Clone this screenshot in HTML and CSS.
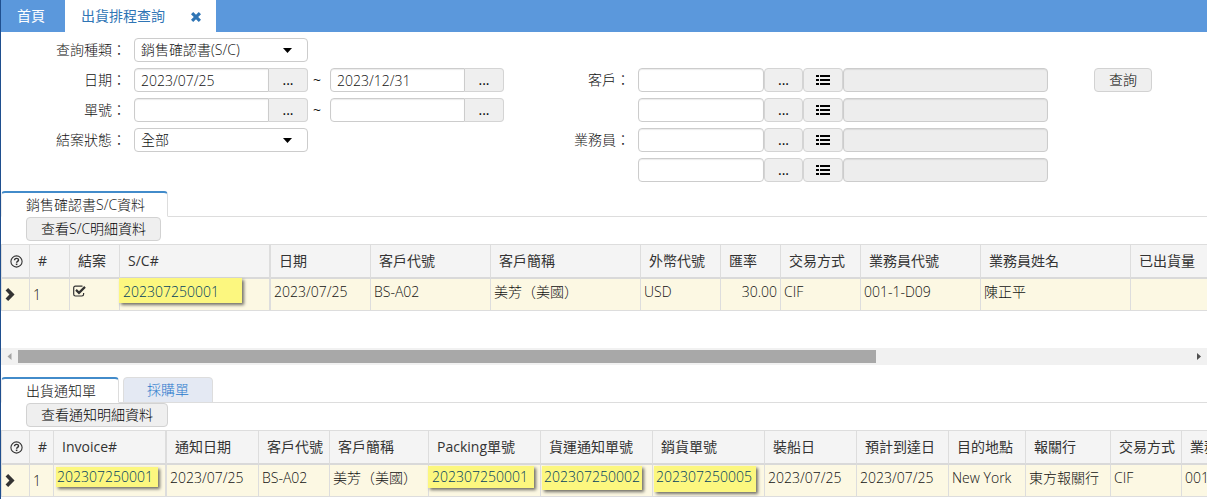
FILE: index.html
```html
<!DOCTYPE html>
<html lang="zh-Hant">
<head>
<meta charset="utf-8">
<meta name="viewport" content="width=device-width, initial-scale=1">
<title>出貨排程查詢</title>
<link rel="stylesheet" href="styles.css">
</head>
<body>
<svg class="sprite" aria-hidden="true">
  <symbol id="i-list" viewBox="0 0 14 12"><path d="M0 1h3v2H0zM4 1h10v2H4zM0 5h3v2H0zM4 5h10v2H4zM0 9h3v2H0zM4 9h10v2H4z"/></symbol>
  <symbol id="i-caret" viewBox="0 0 9 5"><path d="M0 0h9L4.5 5z"/></symbol>
  <symbol id="i-help" viewBox="0 0 13 13"><circle cx="6.5" cy="6.5" r="5.6" fill="none" stroke="currentColor" stroke-width="1.1"/><path d="M4.5 5.2C4.6 2.7 8.6 2.8 8.5 5.1 8.4 6.4 6.6 6.4 6.6 7.8" fill="none" stroke="currentColor" stroke-width="1.4"/><path d="M5.8 8.6h1.6v1.5H5.8z"/></symbol>
  <symbol id="i-chevron" viewBox="0 0 9 12"><path d="M.4 2.4 2.8.1 8.7 6l-5.900 5.900L.4 9.600 4 6z"/></symbol>
</svg>

<nav class="topbar">
  <a class="topbar-tab" href="#">首頁</a>
  <div class="topbar-tab topbar-active">
    <a href="#">出貨排程查詢</a>
    <button class="tab-close" type="button" aria-label="關閉"><svg viewBox="0 0 10 10"><path d="M2.2 0 5 2.8 7.8 0 10 2.2 7.2 5 10 7.8 7.8 10 5 7.2 2.2 10 0 7.8 2.8 5 0 2.2z"/></svg></button>
  </div>
</nav>

<main>
<form class="query">
  <div class="fields fields-left">
    <label for="kind">查詢種類：</label>
    <div class="select"><select id="kind"><option>銷售確認書(S/C)</option></select><svg><use href="#i-caret"/></svg></div>
    <label for="date1">日期：</label>
    <div class="range">
      <div class="picker"><input id="date1" value="2023/07/25"><button type="button">...</button></div>
      <span>~</span>
      <div class="picker"><input aria-label="結束日期" value="2023/12/31"><button type="button">...</button></div>
    </div>
    <label for="no1">單號：</label>
    <div class="range">
      <div class="picker"><input id="no1"><button type="button">...</button></div>
      <span>~</span>
      <div class="picker"><input aria-label="結束單號"><button type="button">...</button></div>
    </div>
    <label for="state">結案狀態：</label>
    <div class="select"><select id="state"><option>全部</option></select><svg><use href="#i-caret"/></svg></div>
  </div>
  <div class="fields fields-right">
    <label for="cust1">客戶：</label>
    <div class="lookup"><input id="cust1"><button type="button">...</button><button type="button" aria-label="清單"><svg><use href="#i-list"/></svg></button><input aria-label="客戶名稱" readonly></div>
    <span></span>
    <div class="lookup"><input aria-label="客戶迄"><button type="button">...</button><button type="button" aria-label="清單"><svg><use href="#i-list"/></svg></button><input aria-label="客戶迄名稱" readonly></div>
    <label for="sales1">業務員：</label>
    <div class="lookup"><input id="sales1"><button type="button">...</button><button type="button" aria-label="清單"><svg><use href="#i-list"/></svg></button><input aria-label="業務員姓名" readonly></div>
    <span></span>
    <div class="lookup"><input aria-label="業務員迄"><button type="button">...</button><button type="button" aria-label="清單"><svg><use href="#i-list"/></svg></button><input aria-label="業務員迄姓名" readonly></div>
  </div>
  <button class="button submit" type="button">查詢</button>
</form>

<section class="panel">
  <div class="tabs"><button class="tab tab-on" type="button">銷售確認書S/C資料</button></div>
  <div class="tools"><button class="button" type="button">查看S/C明細資料</button></div>
  <div class="grid">
    <table class="t-orders">
      <colgroup><col class="w28"><col class="w40"><col class="w50"><col class="w151"><col class="w100"><col class="w120"><col class="w150"><col class="w80"><col class="w60"><col class="w80"><col class="w120"><col class="w150"><col class="w150"></colgroup>
      <thead><tr><th class="mark"><svg class="help"><use href="#i-help"/></svg></th><th>#</th><th>結案</th><th class="frozen">S/C#</th><th>日期</th><th>客戶代號</th><th>客戶簡稱</th><th>外幣代號</th><th>匯率</th><th>交易方式</th><th>業務員代號</th><th>業務員姓名</th><th>已出貨量</th></tr></thead>
      <tbody><tr><td class="mark"><svg class="chevron"><use href="#i-chevron"/></svg></td><td class="seq">1</td><td><input class="check" type="checkbox" checked aria-label="結案"></td><td class="frozen"><a class="hit hit-wide" href="#">202307250001</a></td><td>2023/07/25</td><td>BS-A02</td><td>美芳（美國）</td><td>USD</td><td class="num">30.00</td><td>CIF</td><td>001-1-D09</td><td>陳正平</td><td></td></tr></tbody>
    </table>
  </div>
  <div class="scroll">
    <svg class="dim" viewBox="0 0 17 17"><path d="M10.5 5v7L6.500 8.500z"/></svg>
    <div class="track"><div class="thumb"></div></div>
    <svg viewBox="0 0 17 17"><path d="M7 5v7l4-3.500z"/></svg>
  </div>
</section>

<section class="panel">
  <div class="tabs"><button class="tab tab-on" type="button">出貨通知單</button><button class="tab" type="button">採購單</button></div>
  <div class="tools"><button class="button" type="button">查看通知明細資料</button></div>
  <div class="grid">
    <table class="t-notices">
      <colgroup><col class="w28"><col class="w24"><col class="w113"><col class="w92"><col class="w71"><col class="w99"><col class="w112"><col class="w112"><col class="w112"><col class="w92"><col class="w92"><col class="w77"><col class="w85"><col class="w71"><col class="w120"></colgroup>
      <thead><tr><th class="mark"><svg class="help"><use href="#i-help"/></svg></th><th>#</th><th class="frozen">Invoice#</th><th>通知日期</th><th>客戶代號</th><th>客戶簡稱</th><th>Packing單號</th><th>貨運通知單號</th><th>銷貨單號</th><th>裝船日</th><th>預計到達日</th><th>目的地點</th><th>報關行</th><th>交易方式</th><th>業務員代號</th></tr></thead>
      <tbody><tr><td class="mark"><svg class="chevron"><use href="#i-chevron"/></svg></td><td class="seq">1</td><td class="frozen"><a class="hit hit-slim" href="#">202307250001</a></td><td>2023/07/25</td><td>BS-A02</td><td>美芳（美國）</td><td><a class="hit" href="#">202307250001</a></td><td><a class="hit hit-mid" href="#">202307250002</a></td><td><a class="hit hit-tall" href="#">202307250005</a></td><td>2023/07/25</td><td>2023/07/25</td><td>New York</td><td>東方報關行</td><td>CIF</td><td>001-1-D09</td></tr></tbody>
    </table>
  </div>
</section>
</main>
</body>
</html>
```
FILE: styles.css
```css
* { box-sizing: border-box; }

body {
  margin: 0;
  min-height: 100vh;
  border-left: 1px solid #1f4f8f;
  background: #fff;
  color: #111;
  font: 14px/20px "Open Sans", "Noto Sans CJK TC", sans-serif;
  font-weight: 300;
  overflow: hidden;
}

button, input, select {
  margin: 0;
  font: inherit;
  color: inherit;
}

a { color: inherit; text-decoration: none; }
svg { display: block; fill: currentColor; }
.sprite { display: none; }

/* Top bar */
.topbar { display: flex; height: 32px; background: #5b98dc; }
.topbar-tab { display: flex; align-items: center; padding: 0 20px 0 16px; color: #fff; font-weight: 400; }
.topbar-active { gap: 26px; padding: 0 15px 0 16px; background: #fff; color: #2f75b5; }
.tab-close { padding: 2px 0 0; border: 0; background: none; }
.tab-close svg { width: 10px; height: 10px; }

/* Query form */
.query {
  display: grid;
  grid-template-columns: 503px 544px auto;
  padding-top: 6px;
}
.fields { display: grid; grid-auto-rows: 24px; gap: 6px 8px; align-content: start; }
.fields-left { grid-template-columns: 125px 1fr; }
.fields-right { grid-template-columns: 126px 1fr; padding-top: 30px; }
.fields label { align-self: center; text-align: right; }
.submit { align-self: start; justify-self: start; margin: 30px 0 0 46px; }

.picker, .lookup, .range { display: flex; }
.range { align-items: center; }
.range span { width: 22px; padding-right: 4px; text-align: center; font-weight: 400; }

.query input {
  height: 24px;
  padding: 1px 6px;
  border: 1px solid #ccc;
  border-radius: 4px;
  background: #fff;
  box-shadow: inset 0 1px 1px rgba(0, 0, 0, .08);
}
.picker input { width: 135px; border-radius: 4px 0 0 4px; }
.picker button, .lookup button {
  width: 39px;
  height: 24px;
  padding: 0;
  border: 1px solid #d4d4d4;
  background: #efefef;
  color: #000;
  font-weight: 400;
}
.picker button { border-left: 0; border-radius: 0 4px 4px 0; }
.lookup input { width: 126px; }
.lookup input[readonly] { flex: 1; min-width: 0; background: #ededed; }
.lookup button { border-radius: 4px; }
.lookup button + button { width: 40px; }
.lookup svg { width: 14px; height: 12px; margin: 0 auto; }

.select { display: grid; width: 174px; align-items: center; }
.select select, .select svg { grid-area: 1 / 1; }
.select select {
  width: 100%;
  height: 24px;
  padding: 0 6px;
  border: 1px solid #ccc;
  border-radius: 4px;
  background: #fff;
  appearance: none;
}
.select svg { z-index: 1; justify-self: end; width: 9px; height: 5px; margin-right: 16px; color: #000; pointer-events: none; }

.button {
  height: 24px;
  padding: 0 14px;
  border: 1px solid #d2d2d2;
  border-radius: 4px;
  background: #efefef;
  color: #000;
}

/* Tabs */
.panel + .panel { padding-top: 12px; }
.query + .panel { padding-top: 9px; }
.tabs { display: flex; gap: 4px; height: 26px; border-bottom: 1px solid #ddd; }
.tab {
  height: 26px;
  padding: 0 23px;
  border: 1px solid #ddd;
  border-radius: 4px 4px 0 0;
  background: #e4e9f3;
  color: #2878cc;
}
.tab-on { padding: 1px 22px 0 24px; border-top: 2px solid #428bca; border-left-color: #eee; border-bottom-color: #fff; background: #fff; color: #111; }
.tools { padding: 0 25px 3px; }
.tools .button { display: block; }

/* Data tables */
.grid { overflow: hidden; }
table { table-layout: fixed; border-spacing: 0; border-left: 1px solid #ddd; }
.t-orders { width: 1280px; }
.t-notices { width: 1301px; }
th, td { border-right: 1px solid #ddd; white-space: nowrap; text-align: left; }
th {
  height: 35px;
  padding: 0 0 0 8px;
  border-top: 1px solid #ddd;
  border-bottom: 2px solid #d9d9d9;
  background: #f4f4f4;
  color: #333;
  font-weight: 400;
}
td {
  height: 32px;
  padding: 3px 3px 0;
  border-bottom: 1px solid #ddd;
  background: #fcf8e3;
  vertical-align: top;
}
.frozen { border-right-width: 2px; }
td.num { text-align: right; }
td.seq { padding-top: 6px; }
td.mark { padding: 9px 0 0 3px; color: #333; }
.help { width: 13px; height: 13px; }
.chevron { width: 10px; height: 13px; }

.w24 { width: 24px; }
.w28 { width: 28px; }
.w40 { width: 40px; }
.w50 { width: 50px; }
.w60 { width: 60px; }
.w71 { width: 71px; }
.w77 { width: 77px; }
.w80 { width: 80px; }
.w85 { width: 85px; }
.w92 { width: 92px; }
.w99 { width: 99px; }
.w100 { width: 100px; }
.w112 { width: 112px; }
.w113 { width: 113px; }
.w120 { width: 120px; }
.w150 { width: 150px; }
.w151 { width: 151px; }

.check {
  display: block;
  width: 13px;
  height: 12px;
  margin-top: 3px;
  appearance: none;
  background: url("data:image/svg+xml,%3Csvg xmlns='http://www.w3.org/2000/svg' viewBox='0 0 13 12' fill='none' stroke='%23333'%3E%3Cpath d='M9.500 1.200H2.400Q.7 1.200.7 2.800v6.500q0 1.700 1.700 1.700h6.500q1.700 0 1.700-1.700V8' stroke-width='1.200'/%3E%3Cpath d='M3 4.900l3 3 6-6' stroke-width='2.200'/%3E%3C/svg%3E") no-repeat;
}

.hit {
  display: block;
  width: fit-content;
  margin: -2px 0 0 -4px;
  padding: 1px 6px 1px 4px;
  background: #fcf77f;
  color: #00405f;
  box-shadow: 2px 2px 3px rgba(0, 0, 0, .55);
}
.hit-wide { margin-top: -4px; padding: 4px 23px 1px 4px; }
.hit-slim { margin: -1px 0 0 -1px; padding: 0 5px 0 1px; }
.hit-mid { margin-left: -2px; padding: 1px 2px 3px 2px; }
.hit-tall { margin-left: -2px; padding: 1px 4px 5px 2px; }

/* Horizontal scroll indicator */
.scroll { display: flex; height: 17px; margin-top: 37px; background: #f1f1f1; color: #505050; }
.scroll svg { width: 17px; height: 17px; }
.scroll .dim { color: #a3a3a3; }
.track { flex: 1; padding: 2px 0; }
.thumb { width: 73.2%; height: 13px; background: #a8a8a8; }
```
